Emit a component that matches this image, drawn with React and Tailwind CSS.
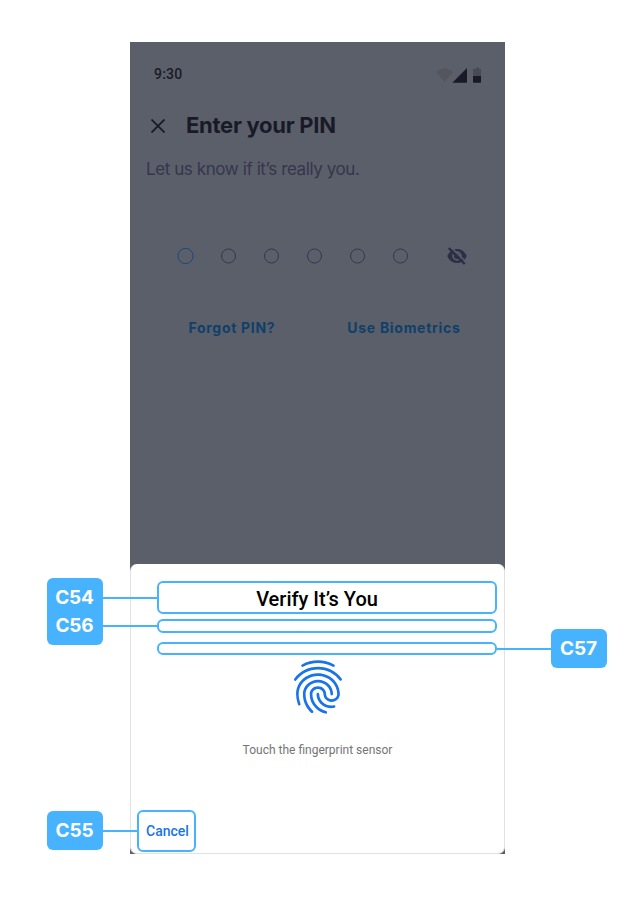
import { MdFingerprint } from "react-icons/md";

function StatusBar() {
  return (
    <div className="flex h-[52px] items-end justify-between pl-6 pr-[23px] pb-[10px] text-[#181b27]">
      <span className="pb-px font-[Roboto] text-[14px] font-medium leading-[18px] tracking-[0.2px]">
        9:30
      </span>
      <svg width="48" height="18" viewBox="0 0 48 18">
        <path d="M1 5Q9.500-2.500 18 5L9.500 15Z" transform="translate(1 1)" fill="#53565f" />
        <path d="M33 2V16.800H18.300Z" fill="#181b27" />
        <path d="M42 1.500h3v1.300h2v7.200h-8V2.800h3Z" fill="#484b55" />
        <path d="M39 10h8v6q0 .8-.8.8h-6.400q-.8 0-.8-.8Z" fill="#181b27" />
      </svg>
    </div>
  );
}

function HiddenEye() {
  return (
    <svg width="20" height="18" viewBox="0 0 20 18" className="ml-[39px]">
      <path
        d="M.3 9C2 4.600 5.600 1.900 10 1.900S18 4.600 19.700 9C18 13.400 14.400 16.100 10 16.100S2 13.400.3 9Z"
        fill="#2d2e47"
      />
      <circle cx="10" cy="9" r="3.900" fill="none" stroke="#5b5f69" strokeWidth="1.700" />
      <path d="M3.300-.6 19.200 15.300" stroke="#5b5f69" strokeWidth="1.600" />
      <path d="M1.700 1 17.700 17" stroke="#2d2e47" strokeWidth="2.400" />
    </svg>
  );
}

function PinDots() {
  return (
    <div className="mt-[65px] flex h-5 items-center pl-[47px]">
      <div className="flex items-center gap-[27px]">
        {[0, 1, 2, 3, 4, 5].map((n) => (
          <svg key={n} width="16" height="16" viewBox="0 0 16 16" className="overflow-visible">
            <circle
              cx="8.500"
              cy="8"
              r={n === 0 ? 7.6 : 7}
              fill="none"
              stroke={n === 0 ? "#164a7c" : "#35364f"}
            />
          </svg>
        ))}
      </div>
      <HiddenEye />
    </div>
  );
}

function Tag({ children, className }) {
  return (
    <div
      className={`absolute flex w-14 flex-col items-center justify-center rounded-[6px] bg-[#47b3ff] pr-px font-[Inter] text-[19px] font-bold leading-[28px] tracking-[-0.1px] text-white ${className}`}
    >
      {children}
    </div>
  );
}

function BiometricSheet() {
  return (
    <div className="flex h-[290px] flex-col rounded-[7px] border-x border-b border-[#e2e2e4] bg-white pt-[17px]">
      <h2 className="ml-[26px] flex h-[33px] w-[340px] items-center justify-center rounded-[6px] border-2 border-[#47b3ff] pr-[20px] pt-[3px] font-[Roboto] text-[20px] font-medium text-black">
        <span>Verify It’s You</span>
      </h2>
      <div className="ml-[26px] mt-[5px] h-[14px] w-[340px] rounded-[6px] border-2 border-[#47b3ff]" />
      <div className="ml-[26px] mt-[9px] h-[13px] w-[340px] rounded-[6px] border-2 border-[#47b3ff]" />
      <div className="pl-[154.500px]">
        <MdFingerprint className="size-16 text-[#1a73e8]" />
      </div>
      <p className="mt-[23px] text-center font-[Roboto] text-[12px] leading-4 text-[#757575]">
        Touch the fingerprint sensor
      </p>
      <button className="mb-px ml-[6px] mt-auto h-[42px] w-[59px] self-start rounded-[6px] border-2 border-[#47b3ff] pl-[2px] pt-px font-[Roboto] text-[14px] font-medium text-[#1a73e8]">
        Cancel
      </button>
    </div>
  );
}

export default function App() {
  return (
    <main className="relative h-[897px] w-[635px] bg-white pt-[42px]">
      <section className="mx-auto flex h-[812px] w-[375px] flex-col bg-[#5b5f69]">
        <StatusBar />
        <header className="mt-[14px] flex h-9 items-center pl-[21px]">
          <svg width="14" height="14" viewBox="0 0 14 14" className="text-[#181b27]">
            <path d="M.5.5 13.500 13.500M13.500.5.5 13.500" stroke="currentColor" strokeWidth="1.800" />
          </svg>
          <h1 className="-mt-px ml-[21px] font-[Inter] text-[22px] font-bold tracking-[-0.28px] text-[#181b27]">
            Enter your PIN
          </h1>
        </header>
        <p className="ml-4 mt-[13px] font-[Inter] text-[17px] leading-6 tracking-[-0.41px] text-[#34364f]">
          Let us know if it’s really you.
        </p>
        <PinDots />
        <div className="mt-[52px] flex gap-[72px] pl-[58.500px] font-[Inter] text-[14px] font-bold leading-5 tracking-[0.7px] text-[#103f6a]">
          <span>Forgot PIN?</span>
          <span>Use Biometrics</span>
        </div>
        <div className="mt-auto">
          <BiometricSheet />
        </div>
      </section>

      <div className="absolute left-[103px] top-[596.500px] h-[2px] w-[54px] bg-[#47b3ff]" />
      <div className="absolute left-[103px] top-[625px] h-[2px] w-[54px] bg-[#47b3ff]" />
      <div className="absolute left-[497px] top-[647.500px] h-[2px] w-[54px] bg-[#47b3ff]" />
      <div className="absolute left-[103px] top-[830px] h-[2px] w-[34px] bg-[#47b3ff]" />
      <Tag className="left-[47px] top-[578px] h-[67px]">
        <span>C54</span>
        <span>C56</span>
      </Tag>
      <Tag className="left-[551px] top-[629px] h-[39px]">C57</Tag>
      <Tag className="left-[47px] top-[811px] h-[39px]">C55</Tag>
    </main>
  );
}
